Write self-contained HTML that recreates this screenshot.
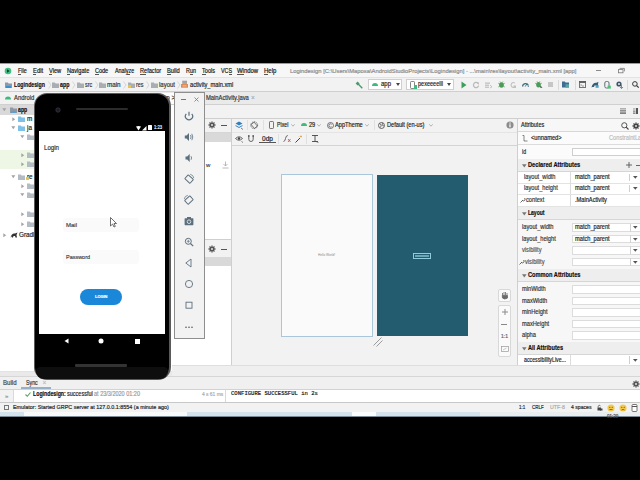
<!DOCTYPE html>
<html><head><meta charset="utf-8">
<style>
*{margin:0;padding:0;box-sizing:border-box}
html,body{width:640px;height:480px;overflow:hidden;background:#000;font-family:"Liberation Sans",sans-serif;color:#222}
.a{position:absolute}
.t{position:absolute;white-space:nowrap;-webkit-text-stroke:0.18px currentColor}
svg{overflow:visible}
</style></head><body>
<div class="a" style="left:0px;top:63px;width:640px;height:353px;background:#f2f2f2;"></div>
<div class="a" style="left:0px;top:63px;width:640px;height:14px;background:#f7f7f7;"></div>
<svg class="a" style="left:4px;top:67px;" width="8" height="8" viewBox="0 0 8 8"><circle cx="4" cy="4" r="3.3" fill="#3fbf83"/><path d="M3 2.3 L5.6 4 L3 5.7Z" fill="#0d3d2a"/></svg>
<div class="t" style="left:18.3px;top:67.90px;font-size:6.6px;line-height:6.6px;color:#111;font-weight:normal;font-family:'Liberation Sans';transform:scaleX(0.818);transform-origin:0 50%;">File</div>
<div class="a" style="left:18.3px;top:73.6px;width:2.61px;height:1px;background:#555;"></div>
<div class="t" style="left:32.8px;top:67.90px;font-size:6.6px;line-height:6.6px;color:#111;font-weight:normal;font-family:'Liberation Sans';transform:scaleX(0.888);transform-origin:0 50%;">Edit</div>
<div class="a" style="left:32.8px;top:73.6px;width:3.0300000000000002px;height:1px;background:#555;"></div>
<div class="t" style="left:48.7px;top:67.90px;font-size:6.6px;line-height:6.6px;color:#111;font-weight:normal;font-family:'Liberation Sans';transform:scaleX(0.860);transform-origin:0 50%;">View</div>
<div class="a" style="left:48.7px;top:73.6px;width:3.6599999999999984px;height:1px;background:#555;"></div>
<div class="t" style="left:66.7px;top:67.90px;font-size:6.6px;line-height:6.6px;color:#111;font-weight:normal;font-family:'Liberation Sans';transform:scaleX(0.856);transform-origin:0 50%;">Navigate</div>
<div class="a" style="left:66.7px;top:73.6px;width:3.5679999999999996px;height:1px;background:#555;"></div>
<div class="t" style="left:94.8px;top:67.90px;font-size:6.6px;line-height:6.6px;color:#111;font-weight:normal;font-family:'Liberation Sans';transform:scaleX(0.837);transform-origin:0 50%;">Code</div>
<div class="a" style="left:94.8px;top:73.6px;width:3.960000000000001px;height:1px;background:#555;"></div>
<div class="t" style="left:114.8px;top:67.90px;font-size:6.6px;line-height:6.6px;color:#111;font-weight:normal;font-family:'Liberation Sans';transform:scaleX(0.818);transform-origin:0 50%;">Analyze</div>
<div class="a" style="left:126.704px;top:73.6px;width:3.072000000000001px;height:1px;background:#555;"></div>
<div class="t" style="left:139.8px;top:67.90px;font-size:6.6px;line-height:6.6px;color:#111;font-weight:normal;font-family:'Liberation Sans';transform:scaleX(0.850);transform-origin:0 50%;">Refactor</div>
<div class="a" style="left:139.8px;top:73.6px;width:6.359999999999997px;height:1px;background:#555;"></div>
<div class="t" style="left:167px;top:67.90px;font-size:6.6px;line-height:6.6px;color:#111;font-weight:normal;font-family:'Liberation Sans';transform:scaleX(0.872);transform-origin:0 50%;">Build</div>
<div class="a" style="left:167.0px;top:73.6px;width:3.8400000000000034px;height:1px;background:#555;"></div>
<div class="t" style="left:185.7px;top:67.90px;font-size:6.6px;line-height:6.6px;color:#111;font-weight:normal;font-family:'Liberation Sans';transform:scaleX(0.826);transform-origin:0 50%;">Run</div>
<div class="a" style="left:189.5px;top:73.6px;width:3.0000000000000004px;height:1px;background:#555;"></div>
<div class="t" style="left:202px;top:67.90px;font-size:6.6px;line-height:6.6px;color:#111;font-weight:normal;font-family:'Liberation Sans';transform:scaleX(0.844);transform-origin:0 50%;">Tools</div>
<div class="a" style="left:202px;top:73.6px;width:3.9px;height:1px;background:#555;"></div>
<div class="t" style="left:220.8px;top:67.90px;font-size:6.6px;line-height:6.6px;color:#111;font-weight:normal;font-family:'Liberation Sans';transform:scaleX(0.811);transform-origin:0 50%;">VCS</div>
<div class="a" style="left:228.5px;top:73.6px;width:3.3000000000000007px;height:1px;background:#555;"></div>
<div class="t" style="left:237.2px;top:67.90px;font-size:6.6px;line-height:6.6px;color:#111;font-weight:normal;font-family:'Liberation Sans';transform:scaleX(0.899);transform-origin:0 50%;">Window</div>
<div class="a" style="left:237.2px;top:73.6px;width:6.330000000000006px;height:1px;background:#555;"></div>
<div class="t" style="left:264px;top:67.90px;font-size:6.6px;line-height:6.6px;color:#111;font-weight:normal;font-family:'Liberation Sans';transform:scaleX(0.906);transform-origin:0 50%;">Help</div>
<div class="a" style="left:264.0px;top:73.6px;width:3.690000000000003px;height:1px;background:#555;"></div>
<div class="t" style="left:290px;top:68.95px;font-size:5.9px;line-height:5.9px;color:#8a8a8a;font-weight:normal;font-family:'Liberation Sans';transform:scaleX(0.993);transform-origin:0 50%;">Logindesign [C:\Users\Maposa\AndroidStudioProjects\Logindesign] - ...\main\res\layout\activity_main.xml [app]</div>
<div class="a" style="left:595.5px;top:70px;width:5.5px;height:1px;background:#8a8a8a;"></div>
<svg class="a" style="left:618px;top:67.5px;" width="7" height="5" viewBox="0 0 7 5"><rect x="0.4" y="1.6" width="4.6" height="3.2" fill="none" stroke="#777" stroke-width="0.8"/><path d="M1.6 0.4 H6.4 V3.4" stroke="#777" stroke-width="0.8" fill="none"/></svg>
<div class="a" style="left:0px;top:63px;width:640px;height:1px;background:#9a9a9a;"></div>
<div class="a" style="left:0px;top:77px;width:640px;height:1px;background:#e3e3e3;"></div>
<div class="a" style="left:0px;top:78px;width:640px;height:13px;background:#f2f2f2;"></div>
<svg class="a" style="left:5px;top:82px;" width="7" height="6" viewBox="0 0 7 6"><path d="M0 0.5 H2.8 L3.6 1.5 H7 V6 H0Z" fill="#8d9aa6"/></svg>
<div class="a" style="left:6px;top:86px;width:5px;height:2px;background:#3a8fd0;"></div>
<div class="t" style="left:13.6px;top:81.70px;font-size:6.6px;line-height:6.6px;color:#111;font-weight:bold;font-family:'Liberation Sans';transform:scaleX(0.788);transform-origin:0 50%;">Logindesign</div>
<svg class="a" style="left:47.5px;top:81px;" width="4" height="8" viewBox="0 0 4 8"><path d="M0.5 0.5 L3 4 L0.5 7.5" stroke="#c8c8c8" stroke-width="0.7" fill="none"/></svg>
<svg class="a" style="left:52px;top:82px;" width="7" height="6" viewBox="0 0 7 6"><path d="M0 0.5 H2.8 L3.6 1.5 H7 V6 H0Z" fill="#a9aeb3"/></svg>
<div class="t" style="left:60.4px;top:81.70px;font-size:6.6px;line-height:6.6px;color:#111;font-weight:bold;font-family:'Liberation Sans';transform:scaleX(0.801);transform-origin:0 50%;">app</div>
<svg class="a" style="left:72.3px;top:81px;" width="4" height="8" viewBox="0 0 4 8"><path d="M0.5 0.5 L3 4 L0.5 7.5" stroke="#c8c8c8" stroke-width="0.7" fill="none"/></svg>
<svg class="a" style="left:76.8px;top:82px;" width="7" height="6" viewBox="0 0 7 6"><path d="M0 0.5 H2.8 L3.6 1.5 H7 V6 H0Z" fill="#a9aeb3"/></svg>
<div class="t" style="left:84.8px;top:81.70px;font-size:6.6px;line-height:6.6px;color:#333;font-weight:normal;font-family:'Liberation Sans';transform:scaleX(0.818);transform-origin:0 50%;">src</div>
<svg class="a" style="left:94.5px;top:81px;" width="4" height="8" viewBox="0 0 4 8"><path d="M0.5 0.5 L3 4 L0.5 7.5" stroke="#c8c8c8" stroke-width="0.7" fill="none"/></svg>
<svg class="a" style="left:99px;top:82px;" width="7" height="6" viewBox="0 0 7 6"><path d="M0 0.5 H2.8 L3.6 1.5 H7 V6 H0Z" fill="#a9aeb3"/></svg>
<div class="t" style="left:107px;top:81.70px;font-size:6.6px;line-height:6.6px;color:#333;font-weight:normal;font-family:'Liberation Sans';transform:scaleX(0.951);transform-origin:0 50%;">main</div>
<svg class="a" style="left:123.1px;top:81px;" width="4" height="8" viewBox="0 0 4 8"><path d="M0.5 0.5 L3 4 L0.5 7.5" stroke="#c8c8c8" stroke-width="0.7" fill="none"/></svg>
<svg class="a" style="left:127.6px;top:82px;" width="7" height="6" viewBox="0 0 7 6"><path d="M0 0.5 H2.8 L3.6 1.5 H7 V6 H0Z" fill="#a9aeb3"/></svg>
<div class="t" style="left:135.8px;top:81.70px;font-size:6.6px;line-height:6.6px;color:#333;font-weight:normal;font-family:'Liberation Sans';transform:scaleX(0.818);transform-origin:0 50%;">res</div>
<svg class="a" style="left:146.0px;top:81px;" width="4" height="8" viewBox="0 0 4 8"><path d="M0.5 0.5 L3 4 L0.5 7.5" stroke="#c8c8c8" stroke-width="0.7" fill="none"/></svg>
<svg class="a" style="left:150.5px;top:82px;" width="7" height="6" viewBox="0 0 7 6"><path d="M0 0.5 H2.8 L3.6 1.5 H7 V6 H0Z" fill="#a9aeb3"/></svg>
<div class="t" style="left:158.7px;top:81.70px;font-size:6.6px;line-height:6.6px;color:#333;font-weight:normal;font-family:'Liberation Sans';transform:scaleX(0.908);transform-origin:0 50%;">layout</div>
<div class="a" style="left:127.6px;top:85px;width:3px;height:3px;background:#e8c44a;"></div>
<svg class="a" style="left:177px;top:81px;" width="4" height="8" viewBox="0 0 4 8"><path d="M0.5 0.5 L3 4 L0.5 7.5" stroke="#c8c8c8" stroke-width="0.7" fill="none"/></svg>
<svg class="a" style="left:181px;top:80px;" width="7" height="8" viewBox="0 0 7 8"><rect x="1.2" y="0.7" width="4.8" height="3.2" fill="#a4a4a4"/><rect x="0" y="4" width="7" height="3.7" fill="#df8b55"/><rect x="1.5" y="5.2" width="4" height="1.3" fill="#f0b58a"/></svg>
<div class="t" style="left:190.4px;top:81.70px;font-size:6.6px;line-height:6.6px;color:#222;font-weight:normal;font-family:'Liberation Sans';transform:scaleX(0.862);transform-origin:0 50%;">activity_main.xml</div>
<svg class="a" style="left:355px;top:81px;" width="8" height="8" viewBox="0 0 8 8"><path d="M0.6 2.4 L2.6 0.4 L4.6 2.4 L2.6 4.4Z" fill="#4c9a6c"/><path d="M3.2 3 L7.3 7.3" stroke="#4c9a6c" stroke-width="1.4"/></svg>
<div class="a" style="left:368px;top:79px;width:34px;height:11px;background:#fff;border:1px solid #cfcfcf"></div>
<svg class="a" style="left:372px;top:82px;" width="6" height="4" viewBox="0 0 6 4"><path d="M0 4 A3 3 0 0 1 6 4Z" fill="#3dbb7f"/></svg>
<div class="t" style="left:381px;top:81.30px;font-size:6.6px;line-height:6.6px;color:#222;font-weight:normal;font-family:'Liberation Sans';transform:scaleX(0.908);transform-origin:0 50%;">app</div>
<svg class="a" style="left:396px;top:83px;" width="4" height="3" viewBox="0 0 4 3"><path d="M0 0 H4 L2 3Z" fill="#444"/></svg>
<div class="a" style="left:406px;top:79px;width:48px;height:11px;background:#fff;border:1px solid #cfcfcf"></div>
<svg class="a" style="left:410px;top:81px;" width="7" height="8" viewBox="0 0 7 8"><rect x="0.5" y="0.5" width="4" height="7" rx="0.8" fill="none" stroke="#666" stroke-width="0.8"/><rect x="4" y="4" width="3" height="4" fill="#3dbb7f"/></svg>
<div class="t" style="left:418px;top:81.30px;font-size:6.6px;line-height:6.6px;color:#222;font-weight:normal;font-family:'Liberation Sans';transform:scaleX(0.841);transform-origin:0 50%;">pexeeeelll</div>
<svg class="a" style="left:447px;top:83px;" width="4" height="3" viewBox="0 0 4 3"><path d="M0 0 H4 L2 3Z" fill="#444"/></svg>
<svg class="a" style="left:461px;top:81px;" width="6" height="8" viewBox="0 0 6 8"><path d="M0.5 0.5 L5.5 4 L0.5 7.5Z" fill="#3e9f5a"/></svg>
<svg class="a" style="left:472.5px;top:81.5px;" width="6" height="6" viewBox="0 0 6 6"><path d="M5.2 1.6 A2.6 2.6 0 1 0 5.6 3.6" stroke="#b9b9b9" stroke-width="1.2" fill="none"/><path d="M3.6 0.2 L6 0.6 L5.6 3Z" fill="#b9b9b9"/></svg>
<svg class="a" style="left:485px;top:81.5px;" width="7" height="6" viewBox="0 0 7 6"><rect x="0" y="0.5" width="5" height="1.2" fill="#bdbdbd"/><rect x="0" y="2.6" width="4" height="1.2" fill="#bdbdbd"/><rect x="0" y="4.6" width="4" height="1.2" fill="#bdbdbd"/><path d="M5 3 L7 4.8 L5 6" stroke="#bdbdbd" stroke-width="0.9" fill="none"/></svg>
<svg class="a" style="left:497.6px;top:80.8px;" width="7" height="7" viewBox="0 0 7 7"><ellipse cx="3.5" cy="4" rx="2.4" ry="2.8" fill="#4d9c55"/><path d="M0.2 2.2 L1.6 3 M6.8 2.2 L5.4 3 M0.2 6 L1.6 5.3 M6.8 6 L5.4 5.3 M2 0.5 L2.7 1.5 M5 0.5 L4.3 1.5" stroke="#4d9c55" stroke-width="0.7"/></svg>
<svg class="a" style="left:510px;top:81.5px;" width="6" height="6" viewBox="0 0 6 6"><path d="M4.8 1 A2.4 2.4 0 1 0 4.8 5" stroke="#c0c0c0" stroke-width="1.1" fill="none"/><rect x="3.5" y="3.5" width="2.5" height="2.5" fill="#c0c0c0"/></svg>
<svg class="a" style="left:522px;top:81.8px;" width="7" height="5" viewBox="0 0 7 5"><path d="M0.6 4.6 A3 3 0 0 1 6.4 3.5" stroke="#3b6f82" stroke-width="1.3" fill="none"/><path d="M3.2 4.6 L4.8 2" stroke="#3b6f82" stroke-width="0.9"/><circle cx="6.3" cy="4.3" r="0.6" fill="#3b6f82"/></svg>
<svg class="a" style="left:535px;top:80.8px;" width="8" height="7" viewBox="0 0 8 7"><ellipse cx="3.5" cy="3.8" rx="2.3" ry="2.7" fill="#4d9c55"/><path d="M0.2 2.2 L1.6 3 M6.8 2.2 L5.4 3 M2 0.3 L2.7 1.3 M5 0.3 L4.3 1.3" stroke="#4d9c55" stroke-width="0.7"/><path d="M5 4.5 L7.5 6.5 L5.5 7Z" fill="#2d4f44"/></svg>
<div class="a" style="left:548px;top:82px;width:4.7px;height:4.8px;background:#c6c6c6;"></div>
<div class="a" style="left:557.8px;top:80px;width:1px;height:10px;background:#d9d9d9;"></div>
<svg class="a" style="left:562px;top:81px;" width="7" height="7" viewBox="0 0 7 7"><path d="M0 0.5 H2.8 L3.6 1.5 H7 V6.5 H0Z" fill="#3f6f8f"/><rect x="3.5" y="3.2" width="3.5" height="3.3" fill="#5aa4a8"/></svg>
<div class="a" style="left:574.7px;top:80px;width:1px;height:10px;background:#d9d9d9;"></div>
<svg class="a" style="left:578.7px;top:81px;" width="7" height="7" viewBox="0 0 7 7"><rect x="0.4" y="0.4" width="6.2" height="6" fill="none" stroke="#555" stroke-width="0.8"/><rect x="0.4" y="0.4" width="6.2" height="1.5" fill="#555"/><path d="M1.5 3.3 L2.6 4.1 L1.5 4.9 M3 5 H5" stroke="#555" stroke-width="0.6" fill="none"/></svg>
<svg class="a" style="left:591px;top:81px;" width="8" height="7" viewBox="0 0 8 7"><path d="M0.5 6.5 C1 3 3 1.5 5.5 1.8 L7.5 0.8 L7 3 L7.2 5.8 L5.8 5.8 L5.5 4.5 L3.5 4.5 L3 6 L1.5 6 Z" fill="#3a5f75"/><rect x="4.6" y="4.2" width="3" height="2.6" fill="#4aa5c8"/></svg>
<svg class="a" style="left:604px;top:80.5px;" width="7" height="8" viewBox="0 0 7 8"><rect x="0.8" y="0.5" width="4.2" height="6.5" rx="1.5" fill="none" stroke="#55606a" stroke-width="0.9"/><rect x="3.6" y="4.6" width="3.2" height="3" fill="#4cc27a"/></svg>
<svg class="a" style="left:616px;top:80.5px;" width="8" height="8" viewBox="0 0 8 8"><circle cx="3" cy="3" r="2.6" fill="#3e5566"/><circle cx="3" cy="3" r="1" fill="#e9eef2"/><path d="M5.5 3.8 V7.5 M4 6 L5.5 7.6 L7 6" stroke="#3a9fc4" stroke-width="1" fill="none"/></svg>
<div class="a" style="left:627.3px;top:80px;width:1px;height:10px;background:#d9d9d9;"></div>
<svg class="a" style="left:632px;top:81px;" width="7" height="7" viewBox="0 0 7 7"><circle cx="2.9" cy="2.9" r="2.3" fill="none" stroke="#333" stroke-width="1"/><path d="M4.6 4.6 L6.7 6.7" stroke="#333" stroke-width="1.2"/></svg>
<div class="a" style="left:0px;top:91px;width:640px;height:1px;background:#cfcfcf;"></div>
<div class="a" style="left:0px;top:92px;width:640px;height:12px;background:#eaeaea;"></div>
<div class="a" style="left:0px;top:92px;width:150px;height:12px;background:#f2f2f2;"></div>
<svg class="a" style="left:5px;top:95px;" width="6" height="5" viewBox="0 0 6 5"><path d="M0 4.5 A3 3 0 0 1 6 4.5Z" fill="#3dbb7f"/></svg>
<div class="t" style="left:13.5px;top:95.00px;font-size:6.6px;line-height:6.6px;color:#333;font-weight:normal;font-family:'Liberation Sans';transform:scaleX(0.892);transform-origin:0 50%;">Android</div>
<div class="t" style="left:206px;top:95.00px;font-size:6.6px;line-height:6.6px;color:#333;font-weight:normal;font-family:'Liberation Sans';transform:scaleX(0.880);transform-origin:0 50%;">MainActivity.java</div>
<div class="t" style="left:251px;top:95.05px;font-size:6.5px;line-height:6.5px;color:#aaa;font-weight:normal;font-family:'Liberation Sans';">×</div>
<div class="a" style="left:0px;top:104px;width:640px;height:1px;background:#d0d0d0;"></div>
<div class="a" style="left:0px;top:105px;width:205px;height:260px;background:#fff;"></div>
<div class="a" style="left:0px;top:105px;width:170px;height:10px;background:#d9d9d9;"></div>
<svg class="a" style="left:2px;top:108.2px;" width="5" height="4" viewBox="0 0 5 4"><path d="M0.3 0.3 H4.3 L2.3 3.2Z" fill="#a3a3a3"/></svg>
<svg class="a" style="left:10px;top:107px;" width="7" height="6" viewBox="0 0 7 6"><path d="M0 0.5 H2.8 L3.6 1.5 H7 V6 H0Z" fill="#8d9aa6"/></svg>
<div class="a" style="left:11px;top:111px;width:5px;height:2px;background:#5aa0d8;"></div>
<div class="t" style="left:18.3px;top:106.70px;font-size:6.6px;line-height:6.6px;color:#111;font-weight:bold;font-family:'Liberation Sans';transform:scaleX(0.784);transform-origin:0 50%;">app</div>
<div class="a" style="left:0px;top:150px;width:34px;height:19px;background:#eef6e6;"></div>
<svg class="a" style="left:11.5px;top:116.7px;" width="4" height="5" viewBox="0 0 4 5"><path d="M0.3 0.3 V4.3 L3.2 2.3Z" fill="#a3a3a3"/></svg>
<svg class="a" style="left:18px;top:116px;" width="7" height="6" viewBox="0 0 7 6"><path d="M0 0.5 H2.8 L3.6 1.5 H7 V6 H0Z" fill="#7ec0e8"/></svg>
<div class="t" style="left:27px;top:115.85px;font-size:6.3px;line-height:6.3px;color:#222;font-weight:normal;font-family:'Liberation Sans';">m</div>
<svg class="a" style="left:11px;top:126.2px;" width="5" height="4" viewBox="0 0 5 4"><path d="M0.3 0.3 H4.3 L2.3 3.2Z" fill="#a3a3a3"/></svg>
<svg class="a" style="left:18px;top:125px;" width="7" height="6" viewBox="0 0 7 6"><path d="M0 0.5 H2.8 L3.6 1.5 H7 V6 H0Z" fill="#7ec0e8"/></svg>
<div class="t" style="left:27px;top:124.85px;font-size:6.3px;line-height:6.3px;color:#222;font-weight:normal;font-family:'Liberation Sans';">ja</div>
<svg class="a" style="left:20px;top:135.2px;" width="5" height="4" viewBox="0 0 5 4"><path d="M0.3 0.3 H4.3 L2.3 3.2Z" fill="#a3a3a3"/></svg>
<svg class="a" style="left:27px;top:134px;" width="7" height="6" viewBox="0 0 7 6"><path d="M0 0.5 H2.8 L3.6 1.5 H7 V6 H0Z" fill="#b3bcc4"/></svg>
<svg class="a" style="left:20.5px;top:152.7px;" width="4" height="5" viewBox="0 0 4 5"><path d="M0.3 0.3 V4.3 L3.2 2.3Z" fill="#a3a3a3"/></svg>
<svg class="a" style="left:27px;top:152px;" width="7" height="6" viewBox="0 0 7 6"><path d="M0 0.5 H2.8 L3.6 1.5 H7 V6 H0Z" fill="#b3bcc4"/></svg>
<svg class="a" style="left:20.5px;top:161.7px;" width="4" height="5" viewBox="0 0 4 5"><path d="M0.3 0.3 V4.3 L3.2 2.3Z" fill="#a3a3a3"/></svg>
<svg class="a" style="left:27px;top:161px;" width="7" height="6" viewBox="0 0 7 6"><path d="M0 0.5 H2.8 L3.6 1.5 H7 V6 H0Z" fill="#b3bcc4"/></svg>
<svg class="a" style="left:11px;top:175.2px;" width="5" height="4" viewBox="0 0 5 4"><path d="M0.3 0.3 H4.3 L2.3 3.2Z" fill="#a3a3a3"/></svg>
<svg class="a" style="left:18px;top:174px;" width="7" height="6" viewBox="0 0 7 6"><path d="M0 0.5 H2.8 L3.6 1.5 H7 V6 H0Z" fill="#b3bcc4"/></svg>
<div class="t" style="left:27px;top:173.85px;font-size:6.3px;line-height:6.3px;color:#222;font-weight:normal;font-family:'Liberation Sans';">re</div>
<svg class="a" style="left:20.5px;top:183.7px;" width="4" height="5" viewBox="0 0 4 5"><path d="M0.3 0.3 V4.3 L3.2 2.3Z" fill="#a3a3a3"/></svg>
<svg class="a" style="left:27px;top:183px;" width="7" height="6" viewBox="0 0 7 6"><path d="M0 0.5 H2.8 L3.6 1.5 H7 V6 H0Z" fill="#b3bcc4"/></svg>
<svg class="a" style="left:20px;top:193.2px;" width="5" height="4" viewBox="0 0 5 4"><path d="M0.3 0.3 H4.3 L2.3 3.2Z" fill="#a3a3a3"/></svg>
<svg class="a" style="left:27px;top:192px;" width="7" height="6" viewBox="0 0 7 6"><path d="M0 0.5 H2.8 L3.6 1.5 H7 V6 H0Z" fill="#b3bcc4"/></svg>
<svg class="a" style="left:20.5px;top:211.7px;" width="4" height="5" viewBox="0 0 4 5"><path d="M0.3 0.3 V4.3 L3.2 2.3Z" fill="#a3a3a3"/></svg>
<svg class="a" style="left:27px;top:211px;" width="7" height="6" viewBox="0 0 7 6"><path d="M0 0.5 H2.8 L3.6 1.5 H7 V6 H0Z" fill="#b3bcc4"/></svg>
<svg class="a" style="left:20.5px;top:221.7px;" width="4" height="5" viewBox="0 0 4 5"><path d="M0.3 0.3 V4.3 L3.2 2.3Z" fill="#a3a3a3"/></svg>
<svg class="a" style="left:27px;top:221px;" width="7" height="6" viewBox="0 0 7 6"><path d="M0 0.5 H2.8 L3.6 1.5 H7 V6 H0Z" fill="#b3bcc4"/></svg>
<div class="a" style="left:26px;top:177px;width:3px;height:3px;background:#e2c25a;"></div>
<svg class="a" style="left:2.5px;top:232.7px;" width="4" height="5" viewBox="0 0 4 5"><path d="M0.3 0.3 V4.3 L3.2 2.3Z" fill="#a3a3a3"/></svg>
<svg class="a" style="left:10px;top:232px;" width="8" height="6" viewBox="0 0 8 6"><path d="M0.5 5.5 C1.5 2 3 1 5 1.5 L7.5 0.5 L6.5 3 L7 5.5 L5.5 5.5 L5 4 L3.5 4 L3 5.5 L1.8 5.5 L2 4.2Z" fill="#333"/></svg>
<div class="t" style="left:19px;top:232.20px;font-size:6.6px;line-height:6.6px;color:#222;font-weight:normal;font-family:'Liberation Sans';transform:scaleX(0.959);transform-origin:0 50%;">Gradle</div>
<div class="a" style="left:205px;top:105px;width:435px;height:13px;background:#f2f2f2;"></div>
<svg class="a" style="left:620px;top:108px;" width="6" height="6" viewBox="0 0 6 6"><rect x="0" y="0" width="6" height="1.6" fill="#b0b0b0"/><rect x="0" y="2.2" width="6" height="1.3" fill="#777"/><rect x="0" y="4.4" width="6" height="1.4" fill="#666"/></svg>
<svg class="a" style="left:632.8px;top:108px;" width="5" height="6" viewBox="0 0 5 6"><rect x="0" y="0.3" width="2.5" height="1.3" fill="#aaa"/><rect x="0" y="2.5" width="2.5" height="1.3" fill="#888"/><rect x="0" y="4.5" width="2.5" height="1.3" fill="#777"/><rect x="3" y="0" width="2" height="6" fill="#555"/></svg>
<div class="a" style="left:205px;top:118px;width:435px;height:1px;background:#cfcfcf;"></div>
<div class="a" style="left:205px;top:119px;width:26px;height:246px;background:#fff;"></div>
<div class="a" style="left:205px;top:119px;width:26px;height:13px;background:#f2f2f2;"></div>
<svg class="a" style="left:208px;top:121px;" width="8" height="8" viewBox="0 0 8 8"><g transform="translate(4 4)" stroke="#555"><path d="M0 -3.5 V3.5 M-3.5 0 H3.5 M-2.5 -2.5 L2.5 2.5 M2.5 -2.5 L-2.5 2.5" stroke-width="1.3"/><circle r="2.3" fill="#555" stroke="none"/><circle r="0.9" fill="#f2f2f2" stroke="none"/></g></svg>
<div class="a" style="left:221px;top:125px;width:6px;height:1px;background:#555;"></div>
<div class="a" style="left:150px;top:93px;width:55px;height:11px;background:#fff;"></div>
<div class="t" style="left:166px;top:95.00px;font-size:6.6px;line-height:6.6px;color:#222;font-weight:normal;font-family:'Liberation Sans';">p &gt;</div>
<div class="a" style="left:205px;top:132px;width:26px;height:1px;background:#d6d6d6;"></div>
<div class="a" style="left:205px;top:133px;width:26px;height:9px;background:#d9d9d9;"></div>
<div class="t" style="left:206px;top:162.00px;font-size:6px;line-height:6px;color:#444;font-weight:normal;font-family:'Liberation Sans';">w</div>
<svg class="a" style="left:222px;top:161px;" width="7" height="8" viewBox="0 0 7 8"><path d="M3.5 0.5 V5 M1.5 3 L3.5 5 L5.5 3 M0.5 7 H6.5" stroke="#aaa" stroke-width="0.8" fill="none"/></svg>
<div class="a" style="left:205px;top:239px;width:26px;height:1px;background:#cfcfcf;"></div>
<div class="a" style="left:205px;top:240px;width:26px;height:17px;background:#f2f2f2;"></div>
<svg class="a" style="left:208px;top:245px;" width="8" height="8" viewBox="0 0 8 8"><g transform="translate(4 4)" stroke="#555"><path d="M0 -3.5 V3.5 M-3.5 0 H3.5 M-2.5 -2.5 L2.5 2.5 M2.5 -2.5 L-2.5 2.5" stroke-width="1.3"/><circle r="2.3" fill="#555" stroke="none"/><circle r="0.9" fill="#f2f2f2" stroke="none"/></g></svg>
<div class="a" style="left:221px;top:249px;width:6px;height:1px;background:#555;"></div>
<div class="a" style="left:205px;top:257px;width:26px;height:9px;background:#d9d9d9;"></div>
<div class="a" style="left:231px;top:119px;width:1px;height:246px;background:#cfcfcf;"></div>
<div class="a" style="left:232px;top:119px;width:285px;height:26px;background:#f2f2f2;"></div>
<div class="a" style="left:232px;top:132px;width:285px;height:1px;background:#e4e4e4;"></div>
<div class="a" style="left:232px;top:145px;width:285px;height:1px;background:#d4d4d4;"></div>
<svg class="a" style="left:235px;top:121px;" width="8" height="9" viewBox="0 0 8 9"><path d="M4 0.5 L7.5 2.5 L4 4.5 L0.5 2.5Z" fill="#2f7fc1"/><path d="M0.5 4 L4 6 L7.5 4 V5 L4 7 L0.5 5Z" fill="#2f7fc1"/><path d="M6 7 L8 8.5" stroke="#333" stroke-width="0.6"/></svg>
<div class="a" style="left:246.7px;top:120px;width:1px;height:10px;background:#e0e0e0;"></div>
<svg class="a" style="left:250px;top:121px;" width="9" height="9" viewBox="0 0 9 9"><circle cx="4.2" cy="4.2" r="3.4" fill="none" stroke="#555" stroke-width="0.8" stroke-dasharray="1.5 0.7"/><rect x="2.3" y="1.8" width="3.8" height="5" transform="rotate(-40 4.2 4.2)" fill="none" stroke="#555" stroke-width="0.7"/></svg>
<div class="a" style="left:262.7px;top:120px;width:1px;height:10px;background:#e0e0e0;"></div>
<svg class="a" style="left:269px;top:121px;" width="5" height="8" viewBox="0 0 5 8"><rect x="0.5" y="0.5" width="4" height="7" rx="0.7" fill="none" stroke="#555" stroke-width="0.8"/></svg>
<div class="t" style="left:276.7px;top:121.90px;font-size:6.6px;line-height:6.6px;color:#222;font-weight:normal;font-family:'Liberation Sans';transform:scaleX(0.790);transform-origin:0 50%;">Pixel</div>
<svg class="a" style="left:290.5px;top:124px;" width="4" height="3" viewBox="0 0 4 3"><path d="M0.3 0.3 L2 2.2 L3.7 0.3" stroke="#888" stroke-width="0.6" fill="none"/></svg>
<svg class="a" style="left:300.5px;top:122px;" width="6" height="4" viewBox="0 0 6 4"><path d="M0 4 A3 3 0 0 1 6 4Z" fill="#3dbb7f"/></svg>
<div class="t" style="left:308.5px;top:121.90px;font-size:6.6px;line-height:6.6px;color:#222;font-weight:normal;font-family:'Liberation Sans';transform:scaleX(0.845);transform-origin:0 50%;">29</div>
<svg class="a" style="left:317px;top:124px;" width="4" height="3" viewBox="0 0 4 3"><path d="M0.3 0.3 L2 2.2 L3.7 0.3" stroke="#888" stroke-width="0.6" fill="none"/></svg>
<svg class="a" style="left:327px;top:121.5px;" width="7" height="7" viewBox="0 0 7 7"><circle cx="3.5" cy="3.5" r="3" fill="none" stroke="#444" stroke-width="0.7"/><path d="M4.6 2.3 A1.6 1.6 0 1 0 4.6 4.7" stroke="#444" stroke-width="0.7" fill="none"/></svg>
<div class="t" style="left:335px;top:121.90px;font-size:6.6px;line-height:6.6px;color:#222;font-weight:normal;font-family:'Liberation Sans';transform:scaleX(0.861);transform-origin:0 50%;">AppTheme</div>
<svg class="a" style="left:365px;top:124px;" width="4" height="3" viewBox="0 0 4 3"><path d="M0.3 0.3 L2 2.2 L3.7 0.3" stroke="#888" stroke-width="0.6" fill="none"/></svg>
<div class="a" style="left:373.5px;top:120px;width:1px;height:10px;background:#e0e0e0;"></div>
<svg class="a" style="left:378px;top:121.5px;" width="7" height="7" viewBox="0 0 7 7"><circle cx="3.5" cy="3.5" r="3" fill="none" stroke="#444" stroke-width="0.8"/><path d="M1.5 1.5 L3.2 3 L2.6 5.5 M4.5 0.8 L4 3 L6 4" stroke="#444" stroke-width="0.7" fill="none"/></svg>
<div class="t" style="left:386.6px;top:121.90px;font-size:6.6px;line-height:6.6px;color:#222;font-weight:normal;font-family:'Liberation Sans';transform:scaleX(0.857);transform-origin:0 50%;">Default (en-us)</div>
<svg class="a" style="left:428.5px;top:124px;" width="4" height="3" viewBox="0 0 4 3"><path d="M0.3 0.3 L2 2.2 L3.7 0.3" stroke="#888" stroke-width="0.6" fill="none"/></svg>
<svg class="a" style="left:506px;top:121px;" width="8" height="8" viewBox="0 0 8 8"><circle cx="4" cy="4" r="3.6" fill="#8c8c8c"/><rect x="3.4" y="3.3" width="1.2" height="3" fill="#fff"/><rect x="3.4" y="1.5" width="1.2" height="1.1" fill="#fff"/></svg>
<svg class="a" style="left:235px;top:135px;" width="9" height="8" viewBox="0 0 9 8"><path d="M0.5 3.5 Q4 0 7.5 3.5 Q4 7 0.5 3.5Z" fill="none" stroke="#444" stroke-width="0.8"/><circle cx="4" cy="3.5" r="1.2" fill="#444"/><path d="M6.5 6.5 L8 7.5" stroke="#333" stroke-width="0.6"/></svg>
<svg class="a" style="left:248px;top:135px;" width="6" height="8" viewBox="0 0 6 8"><path d="M0.8 0.5 V4.3 A2.2 2.2 0 0 0 5.2 4.3 V0.5" fill="none" stroke="#555" stroke-width="0.9"/><rect x="0.2" y="0.3" width="1.3" height="1.3" fill="#333"/><rect x="4.5" y="0.3" width="1.3" height="1.3" fill="#333"/></svg>
<div class="t" style="left:261.6px;top:136.10px;font-size:6.4px;line-height:6.4px;color:#222;font-weight:normal;font-family:'Liberation Sans';transform:scaleX(1.021);transform-origin:0 50%;">0dp</div>
<div class="a" style="left:258.5px;top:142.2px;width:17px;height:1px;background:#555;"></div>
<div class="a" style="left:278.3px;top:134px;width:1px;height:10px;background:#e0e0e0;"></div>
<svg class="a" style="left:283px;top:135px;" width="8" height="8" viewBox="0 0 8 8"><path d="M0.5 6.5 Q2 6.5 2.5 3.5 Q3 0.5 4.8 0.5" stroke="#444" stroke-width="0.8" fill="none"/><path d="M5 4 L7.5 7 M7.5 4 L5 7" stroke="#d0453d" stroke-width="0.8"/></svg>
<svg class="a" style="left:295px;top:135px;" width="8" height="8" viewBox="0 0 8 8"><path d="M0.5 7.5 L5 3" stroke="#444" stroke-width="1"/><path d="M6 0.5 V2.5 M5 1.5 H7 M3.5 1 L4 1.5" stroke="#d89a3d" stroke-width="0.7"/></svg>
<div class="a" style="left:306px;top:134px;width:1px;height:10px;background:#e0e0e0;"></div>
<svg class="a" style="left:311px;top:135px;" width="8" height="8" viewBox="0 0 8 8"><path d="M1 0.5 H7 M4 0.5 V6.5 M1 6.5 H7" stroke="#444" stroke-width="0.9"/><path d="M5.5 7 L7.5 7.5" stroke="#333" stroke-width="0.5"/></svg>
<div class="a" style="left:232px;top:146px;width:285px;height:219px;background:#f2f2f2;"></div>
<div class="a" style="left:281px;top:174px;width:92px;height:163px;background:#fafafa;border:1px solid #a9c6da"></div>
<div class="t" style="left:317.6px;top:253.70px;font-size:3.6px;line-height:3.6px;color:#888;font-weight:normal;font-family:'Liberation Sans';transform:scaleX(0.880);transform-origin:0 50%;-webkit-text-stroke:0">Hello World!</div>
<div class="a" style="left:377px;top:175px;width:91px;height:161px;background:#225c6e;"></div>
<div class="a" style="left:413px;top:253px;width:18px;height:5.5px;background:transparent;border:0.8px solid #8fcbdc"></div>
<div class="a" style="left:415px;top:255px;width:14px;height:1.5px;background:#6aa7b6;"></div>
<svg class="a" style="left:373px;top:337px;" width="11" height="10" viewBox="0 0 11 10"><path d="M0.5 8.5 L8.5 0.5 M3.5 9.5 L9.5 3.5" stroke="#777" stroke-width="0.7"/></svg>
<div class="a" style="left:498px;top:289px;width:13px;height:13px;background:#fafafa;border:1px solid #d8d8d8;border-radius:2px"></div>
<svg class="a" style="left:500.5px;top:291px;" width="8" height="9" viewBox="0 0 8 9"><path d="M1.5 4.5 V2 M3 4 V1 M4.5 4 V1 M6 4.5 V2 M1.2 4.5 L1.5 7 Q3.5 9 6.5 7 L6.5 4.5 Z" stroke="#6a6a6a" stroke-width="0.8" fill="#6a6a6a"/></svg>
<div class="a" style="left:498px;top:305px;width:13px;height:52px;background:#fafafa;border:1px solid #d8d8d8;border-radius:2px"></div>
<svg class="a" style="left:501.5px;top:309px;" width="6" height="6" viewBox="0 0 6 6"><path d="M3 0 V6 M0 3 H6" stroke="#8a8a8a" stroke-width="1"/></svg>
<div class="a" style="left:501px;top:324px;width:6px;height:1px;background:#888;"></div>
<div class="t" style="left:501px;top:334.30px;font-size:5px;line-height:5px;color:#666;font-weight:normal;font-family:'Liberation Sans';transform:scaleX(1.007);transform-origin:0 50%;">1:1</div>
<svg class="a" style="left:500.5px;top:346px;" width="8" height="6" viewBox="0 0 8 6"><rect x="0.5" y="0.5" width="7" height="5" fill="none" stroke="#999" stroke-width="0.7"/><path d="M2 4 L5.5 2" stroke="#999" stroke-width="0.5"/></svg>
<div class="a" style="left:517px;top:119px;width:1px;height:246px;background:#cfcfcf;"></div>
<div class="a" style="left:518px;top:119px;width:122px;height:246px;background:#f7f7f7;"></div>
<div class="t" style="left:520.8px;top:122.30px;font-size:6.6px;line-height:6.6px;color:#222;font-weight:normal;font-family:'Liberation Sans';transform:scaleX(0.832);transform-origin:0 50%;">Attributes</div>
<svg class="a" style="left:620.5px;top:121.5px;" width="8" height="8" viewBox="0 0 8 8"><circle cx="3.3" cy="3.3" r="2.6" fill="none" stroke="#444" stroke-width="0.9"/><path d="M5.2 5.2 L7.5 7.5" stroke="#444" stroke-width="1.1"/></svg>
<svg class="a" style="left:632px;top:121.5px;" width="8" height="8" viewBox="0 0 8 8"><g transform="translate(4 4)" stroke="#444"><path d="M0 -3.5 V3.5 M-3.5 0 H3.5 M-2.5 -2.5 L2.5 2.5 M2.5 -2.5 L-2.5 2.5" stroke-width="1.3"/><circle r="2.3" fill="#444" stroke="none"/><circle r="0.9" fill="#f2f2f2" stroke="none"/></g></svg>
<div class="a" style="left:518px;top:131px;width:122px;height:1px;background:#d8d8d8;"></div>
<div class="a" style="left:518px;top:132px;width:122px;height:12px;background:#fbfbfb;"></div>
<svg class="a" style="left:522px;top:134.5px;" width="6" height="7" viewBox="0 0 6 7"><path d="M0.5 0.5 H2 V6 H5.5" stroke="#555" stroke-width="0.7" fill="none"/></svg>
<div class="t" style="left:531px;top:134.70px;font-size:6.6px;line-height:6.6px;color:#222;font-weight:normal;font-family:'Liberation Sans';transform:scaleX(0.871);transform-origin:0 50%;">&lt;unnamed&gt;</div>
<div class="t" style="left:609px;top:134.70px;font-size:6.6px;line-height:6.6px;color:#bbb;font-weight:normal;font-family:'Liberation Sans';transform:scaleX(0.862);transform-origin:0 50%;">ConstraintLayout</div>
<div class="a" style="left:518px;top:144px;width:122px;height:1px;background:#dcdcdc;"></div>
<div class="a" style="left:518px;top:145px;width:122px;height:14px;background:#fbfbfb;"></div>
<div class="t" style="left:521.5px;top:149.00px;font-size:6.6px;line-height:6.6px;color:#222;font-weight:normal;font-family:'Liberation Sans';transform:scaleX(0.779);transform-origin:0 50%;">id</div>
<div class="a" style="left:571.5px;top:147.5px;width:70px;height:8px;background:#fff;border:1px solid #cfcfcf"></div>
<div class="a" style="left:518px;top:158.5px;width:122px;height:1px;background:#d6d6d6;"></div>
<div class="a" style="left:518px;top:159px;width:122px;height:12px;background:#eeeeee;"></div>
<svg class="a" style="left:521.5px;top:163.5px;" width="5" height="4" viewBox="0 0 5 4"><path d="M0 0.3 H4.6 L2.3 3.5Z" fill="#777"/></svg>
<div class="t" style="left:527.5px;top:162.20px;font-size:6.6px;line-height:6.6px;color:#111;font-weight:bold;font-family:'Liberation Sans';transform:scaleX(0.863);transform-origin:0 50%;">Declared Attributes</div>
<div class="a" style="left:518px;top:171px;width:122px;height:1px;background:#d6d6d6;"></div>
<svg class="a" style="left:626.3px;top:162.3px;" width="6" height="6" viewBox="0 0 6 6"><path d="M3 0 V6 M0 3 H6" stroke="#555" stroke-width="0.9"/></svg>
<div class="a" style="left:636px;top:165px;width:6px;height:1px;background:#666;"></div>
<div class="a" style="left:518px;top:172px;width:122px;height:35px;background:#fff;"></div>
<div class="t" style="left:524px;top:173.70px;font-size:6.6px;line-height:6.6px;color:#333;font-weight:normal;font-family:'Liberation Sans';transform:scaleX(0.860);transform-origin:0 50%;">layout_width</div>
<div class="a" style="left:570.4px;top:171.5px;width:1px;height:11px;background:#dcdcdc;"></div>
<div class="t" style="left:575px;top:173.70px;font-size:6.6px;line-height:6.6px;color:#222;font-weight:normal;font-family:'Liberation Sans';transform:scaleX(0.860);transform-origin:0 50%;">match_parent</div>
<div class="a" style="left:629px;top:173.5px;width:1px;height:7px;background:#cfcfcf;"></div>
<svg class="a" style="left:633px;top:175.8px;" width="5" height="3" viewBox="0 0 5 3"><path d="M0 0 H4.6 L2.3 2.8Z" fill="#555"/></svg>
<div class="a" style="left:518px;top:182.7px;width:122px;height:1px;background:#e3e3e3;"></div>
<div class="t" style="left:524px;top:185.00px;font-size:6.6px;line-height:6.6px;color:#333;font-weight:normal;font-family:'Liberation Sans';transform:scaleX(0.860);transform-origin:0 50%;">layout_height</div>
<div class="a" style="left:570.4px;top:182.8px;width:1px;height:11px;background:#dcdcdc;"></div>
<div class="t" style="left:575px;top:185.00px;font-size:6.6px;line-height:6.6px;color:#222;font-weight:normal;font-family:'Liberation Sans';transform:scaleX(0.860);transform-origin:0 50%;">match_parent</div>
<div class="a" style="left:629px;top:184.8px;width:1px;height:7px;background:#cfcfcf;"></div>
<svg class="a" style="left:633px;top:187.10000000000002px;" width="5" height="3" viewBox="0 0 5 3"><path d="M0 0 H4.6 L2.3 2.8Z" fill="#555"/></svg>
<div class="a" style="left:518px;top:194.0px;width:122px;height:1px;background:#e3e3e3;"></div>
<svg class="a" style="left:519.5px;top:197px;" width="5" height="6" viewBox="0 0 5 6"><path d="M0.5 5.5 L3 3 M2.5 3.5 A1.5 1.5 0 1 0 4.5 1" stroke="#444" stroke-width="0.8" fill="none"/></svg>
<div class="t" style="left:526px;top:196.70px;font-size:6.6px;line-height:6.6px;color:#333;font-weight:normal;font-family:'Liberation Sans';transform:scaleX(0.860);transform-origin:0 50%;">context</div>
<div class="a" style="left:570.4px;top:194.5px;width:1px;height:11px;background:#dcdcdc;"></div>
<div class="t" style="left:575px;top:196.70px;font-size:6.6px;line-height:6.6px;color:#222;font-weight:normal;font-family:'Liberation Sans';transform:scaleX(0.860);transform-origin:0 50%;">.MainActivity</div>
<div class="a" style="left:518px;top:205.7px;width:122px;height:1px;background:#e3e3e3;"></div>
<div class="a" style="left:518px;top:206.5px;width:122px;height:1px;background:#d6d6d6;"></div>
<div class="a" style="left:518px;top:207px;width:122px;height:12px;background:#eeeeee;"></div>
<svg class="a" style="left:521.5px;top:211.5px;" width="5" height="4" viewBox="0 0 5 4"><path d="M0 0.3 H4.6 L2.3 3.5Z" fill="#777"/></svg>
<div class="t" style="left:527.5px;top:210.20px;font-size:6.6px;line-height:6.6px;color:#111;font-weight:bold;font-family:'Liberation Sans';transform:scaleX(0.763);transform-origin:0 50%;">Layout</div>
<div class="a" style="left:518px;top:219px;width:122px;height:1px;background:#d6d6d6;"></div>
<div class="t" style="left:522px;top:224.20px;font-size:6.6px;line-height:6.6px;color:#333;font-weight:normal;font-family:'Liberation Sans';transform:scaleX(0.860);transform-origin:0 50%;">layout_width</div>
<div class="a" style="left:571.5px;top:223.2px;width:70px;height:8.6px;background:#fff;border:1px solid #dcdcdc"></div>
<div class="t" style="left:575px;top:224.20px;font-size:6.6px;line-height:6.6px;color:#222;font-weight:normal;font-family:'Liberation Sans';transform:scaleX(0.860);transform-origin:0 50%;">match_parent</div>
<div class="a" style="left:630px;top:223.5px;width:1px;height:8px;background:#d2d2d2;"></div>
<svg class="a" style="left:633px;top:226.3px;" width="5" height="3" viewBox="0 0 5 3"><path d="M0 0 H4.6 L2.3 2.8Z" fill="#555"/></svg>
<div class="t" style="left:522px;top:235.70px;font-size:6.6px;line-height:6.6px;color:#333;font-weight:normal;font-family:'Liberation Sans';transform:scaleX(0.860);transform-origin:0 50%;">layout_height</div>
<div class="a" style="left:571.5px;top:234.7px;width:70px;height:8.6px;background:#fff;border:1px solid #dcdcdc"></div>
<div class="t" style="left:575px;top:235.70px;font-size:6.6px;line-height:6.6px;color:#222;font-weight:normal;font-family:'Liberation Sans';transform:scaleX(0.860);transform-origin:0 50%;">match_parent</div>
<div class="a" style="left:630px;top:235px;width:1px;height:8px;background:#d2d2d2;"></div>
<svg class="a" style="left:633px;top:237.8px;" width="5" height="3" viewBox="0 0 5 3"><path d="M0 0 H4.6 L2.3 2.8Z" fill="#555"/></svg>
<div class="t" style="left:522px;top:247.10px;font-size:6.6px;line-height:6.6px;color:#555;font-weight:normal;font-family:'Liberation Sans';transform:scaleX(0.860);transform-origin:0 50%;">visibility</div>
<div class="a" style="left:571.5px;top:246.1px;width:70px;height:8.6px;background:#fff;border:1px solid #dcdcdc"></div>
<div class="a" style="left:630px;top:246.4px;width:1px;height:8px;background:#d2d2d2;"></div>
<svg class="a" style="left:633px;top:249.20000000000002px;" width="5" height="3" viewBox="0 0 5 3"><path d="M0 0 H4.6 L2.3 2.8Z" fill="#555"/></svg>
<svg class="a" style="left:519px;top:259px;" width="5" height="6" viewBox="0 0 5 6"><path d="M0.5 5.5 L3 3 M2.5 3.5 A1.5 1.5 0 1 0 4.5 1" stroke="#444" stroke-width="0.8" fill="none"/></svg>
<div class="t" style="left:525px;top:258.70px;font-size:6.6px;line-height:6.6px;color:#555;font-weight:normal;font-family:'Liberation Sans';transform:scaleX(0.860);transform-origin:0 50%;">visibility</div>
<div class="a" style="left:571.5px;top:257.7px;width:70px;height:8.6px;background:#fff;border:1px solid #dcdcdc"></div>
<div class="a" style="left:630px;top:258px;width:1px;height:8px;background:#d2d2d2;"></div>
<svg class="a" style="left:633px;top:260.8px;" width="5" height="3" viewBox="0 0 5 3"><path d="M0 0 H4.6 L2.3 2.8Z" fill="#555"/></svg>
<div class="a" style="left:518px;top:268.5px;width:122px;height:1px;background:#d6d6d6;"></div>
<div class="a" style="left:518px;top:269px;width:122px;height:12px;background:#eeeeee;"></div>
<svg class="a" style="left:521.5px;top:273.5px;" width="5" height="4" viewBox="0 0 5 4"><path d="M0 0.3 H4.6 L2.3 3.5Z" fill="#777"/></svg>
<div class="t" style="left:527.5px;top:272.20px;font-size:6.6px;line-height:6.6px;color:#111;font-weight:bold;font-family:'Liberation Sans';transform:scaleX(0.856);transform-origin:0 50%;">Common Attributes</div>
<div class="a" style="left:518px;top:281px;width:122px;height:1px;background:#d6d6d6;"></div>
<div class="t" style="left:522px;top:286.40px;font-size:6.6px;line-height:6.6px;color:#333;font-weight:normal;font-family:'Liberation Sans';transform:scaleX(0.860);transform-origin:0 50%;">minWidth</div>
<div class="a" style="left:571.5px;top:285.4px;width:70px;height:8.6px;background:#fff;border:1px solid #dcdcdc"></div>
<div class="t" style="left:522px;top:297.70px;font-size:6.6px;line-height:6.6px;color:#333;font-weight:normal;font-family:'Liberation Sans';transform:scaleX(0.860);transform-origin:0 50%;">maxWidth</div>
<div class="a" style="left:571.5px;top:296.7px;width:70px;height:8.6px;background:#fff;border:1px solid #dcdcdc"></div>
<div class="t" style="left:522px;top:309.00px;font-size:6.6px;line-height:6.6px;color:#333;font-weight:normal;font-family:'Liberation Sans';transform:scaleX(0.860);transform-origin:0 50%;">minHeight</div>
<div class="a" style="left:571.5px;top:308.0px;width:70px;height:8.6px;background:#fff;border:1px solid #dcdcdc"></div>
<div class="t" style="left:522px;top:320.50px;font-size:6.6px;line-height:6.6px;color:#333;font-weight:normal;font-family:'Liberation Sans';transform:scaleX(0.860);transform-origin:0 50%;">maxHeight</div>
<div class="a" style="left:571.5px;top:319.5px;width:70px;height:8.6px;background:#fff;border:1px solid #dcdcdc"></div>
<div class="t" style="left:522px;top:332.20px;font-size:6.6px;line-height:6.6px;color:#333;font-weight:normal;font-family:'Liberation Sans';transform:scaleX(0.860);transform-origin:0 50%;">alpha</div>
<div class="a" style="left:571.5px;top:331.2px;width:70px;height:8.6px;background:#fff;border:1px solid #dcdcdc"></div>
<div class="a" style="left:518px;top:341.8px;width:122px;height:1px;background:#d6d6d6;"></div>
<div class="a" style="left:518px;top:342px;width:122px;height:12px;background:#eeeeee;"></div>
<svg class="a" style="left:521.5px;top:346.5px;" width="5" height="4" viewBox="0 0 5 4"><path d="M0 0.3 H4.6 L2.3 3.5Z" fill="#777"/></svg>
<div class="t" style="left:527.5px;top:345.20px;font-size:6.6px;line-height:6.6px;color:#111;font-weight:bold;font-family:'Liberation Sans';transform:scaleX(0.852);transform-origin:0 50%;">All Attributes</div>
<div class="a" style="left:518px;top:354px;width:122px;height:1px;background:#d6d6d6;"></div>
<div class="a" style="left:518px;top:355px;width:122px;height:10px;background:#fff;"></div>
<div class="t" style="left:524px;top:357.00px;font-size:6.6px;line-height:6.6px;color:#222;font-weight:normal;font-family:'Liberation Sans';transform:scaleX(0.795);transform-origin:0 50%;">accessibilityLive...</div>
<div class="a" style="left:570px;top:355px;width:1px;height:10px;background:#dcdcdc;"></div>
<div class="a" style="left:629px;top:356px;width:1px;height:8px;background:#cfcfcf;"></div>
<svg class="a" style="left:633px;top:359px;" width="5" height="3" viewBox="0 0 5 3"><path d="M0 0 H4.6 L2.3 2.8Z" fill="#555"/></svg>
<div class="a" style="left:0px;top:365px;width:640px;height:11px;background:#efefef;"></div>
<div class="a" style="left:0px;top:365px;width:172px;height:6px;background:#fff;"></div>
<div class="a" style="left:0px;top:371px;width:172px;height:1px;background:#e2e2e2;"></div>
<div class="a" style="left:0px;top:372px;width:172px;height:4px;background:#e9e9e9;"></div>
<div class="a" style="left:172px;top:365px;width:468px;height:1px;background:#dedede;"></div>
<div class="a" style="left:0px;top:376px;width:640px;height:1px;background:#d6d6d6;"></div>
<div class="a" style="left:0px;top:377px;width:640px;height:12px;background:#f0f0f0;"></div>
<div class="t" style="left:2.8px;top:379.70px;font-size:6.6px;line-height:6.6px;color:#444;font-weight:normal;font-family:'Liberation Sans';transform:scaleX(0.927);transform-origin:0 50%;">Build</div>
<div class="t" style="left:26.2px;top:379.70px;font-size:6.6px;line-height:6.6px;color:#333;font-weight:normal;font-family:'Liberation Sans';transform:scaleX(0.797);transform-origin:0 50%;">Sync</div>
<div class="t" style="left:42.5px;top:379.55px;font-size:6.5px;line-height:6.5px;color:#bbb;font-weight:normal;font-family:'Liberation Sans';">×</div>
<div class="a" style="left:20.6px;top:387px;width:30px;height:1.5px;background:#98b0c6;"></div>
<svg class="a" style="left:632px;top:379.5px;" width="8" height="8" viewBox="0 0 8 8"><g transform="translate(4 4)" stroke="#555"><path d="M0 -3.5 V3.5 M-3.5 0 H3.5 M-2.5 -2.5 L2.5 2.5 M2.5 -2.5 L-2.5 2.5" stroke-width="1.3"/><circle r="2.3" fill="#555" stroke="none"/><circle r="0.9" fill="#f2f2f2" stroke="none"/></g></svg>
<div class="a" style="left:0px;top:388.8px;width:640px;height:1px;background:#d2d2d2;"></div>
<div class="a" style="left:0px;top:389.5px;width:640px;height:12.5px;background:#fff;"></div>
<div class="a" style="left:0px;top:389.5px;width:13px;height:12.5px;background:#f2f2f2;"></div>
<div class="a" style="left:13px;top:389.5px;width:1px;height:12.5px;background:#dadada;"></div>
<div class="t" style="left:5px;top:393.20px;font-size:6px;line-height:6px;color:#999;font-weight:normal;font-family:'Liberation Sans';">»</div>
<svg class="a" style="left:24.5px;top:392px;" width="6" height="5" viewBox="0 0 6 5"><path d="M0.5 2.5 L2.3 4.3 L5.5 0.5" stroke="#5aa35a" stroke-width="1.1" fill="none"/></svg>
<div class="t" style="left:32.8px;top:391.40px;font-size:6.6px;line-height:6.6px;color:#111;font-weight:bold;font-family:'Liberation Sans';transform:scaleX(0.792);transform-origin:0 50%;">Logindesign:</div>
<div class="t" style="left:66.7px;top:391.40px;font-size:6.6px;line-height:6.6px;color:#222;font-weight:normal;font-family:'Liberation Sans';transform:scaleX(0.837);transform-origin:0 50%;">successful</div>
<div class="t" style="left:94px;top:391.40px;font-size:6.6px;line-height:6.6px;color:#999;font-weight:normal;font-family:'Liberation Sans';transform:scaleX(0.836);transform-origin:0 50%;">at 23/3/2020 01:20</div>
<div class="t" style="left:201.6px;top:391.90px;font-size:5.6px;line-height:5.6px;color:#aaa;font-weight:normal;font-family:'Liberation Sans';transform:scaleX(0.873);transform-origin:0 50%;">4 s 61 ms</div>
<div class="a" style="left:225.4px;top:389.5px;width:1px;height:12.5px;background:#dadada;"></div>
<div class="t" style="left:230.9px;top:391.20px;font-size:6px;line-height:6px;color:#111;font-weight:normal;font-family:'Liberation Mono';transform:scaleX(0.929);transform-origin:0 50%;">CONFIGURE SUCCESSFUL in 2s</div>
<div class="a" style="left:0px;top:402px;width:640px;height:1px;background:#c8c8c8;"></div>
<div class="a" style="left:0px;top:402.5px;width:640px;height:9.5px;background:#f2f2f2;"></div>
<div class="a" style="left:3.5px;top:404.5px;width:5.5px;height:5px;background:transparent;border:0.8px solid #777"></div>
<div class="t" style="left:12.9px;top:404.10px;font-size:6.2px;line-height:6.2px;color:#222;font-weight:normal;font-family:'Liberation Sans';transform:scaleX(0.874);transform-origin:0 50%;">Emulator: Started GRPC server at 127.0.0.1:8554 (a minute ago)</div>
<div class="t" style="left:518.75px;top:404.10px;font-size:6.2px;line-height:6.2px;color:#222;font-weight:normal;font-family:'Liberation Sans';transform:scaleX(0.725);transform-origin:0 50%;">1:1</div>
<div class="t" style="left:532px;top:404.10px;font-size:6.2px;line-height:6.2px;color:#222;font-weight:normal;font-family:'Liberation Sans';transform:scaleX(0.726);transform-origin:0 50%;">CRLF</div>
<div class="t" style="left:550px;top:404.10px;font-size:6.2px;line-height:6.2px;color:#aaa;font-weight:normal;font-family:'Liberation Sans';transform:scaleX(0.854);transform-origin:0 50%;">UTF-8</div>
<div class="t" style="left:570.75px;top:404.10px;font-size:6.2px;line-height:6.2px;color:#222;font-weight:normal;font-family:'Liberation Sans';transform:scaleX(0.826);transform-origin:0 50%;">4 spaces</div>
<svg class="a" style="left:597px;top:404.5px;" width="6" height="6" viewBox="0 0 6 6"><rect x="0.5" y="2.5" width="3.5" height="3" fill="#444"/><path d="M1.2 2.5 V1.2 A1.2 1.2 0 0 1 3.5 1.2" stroke="#444" stroke-width="0.7" fill="none"/><rect x="3" y="3.5" width="2.5" height="2" fill="#444"/></svg>
<svg class="a" style="left:607px;top:403.5px;" width="8" height="8" viewBox="0 0 8 8"><circle cx="4" cy="4" r="3.6" fill="#f2c94c"/><circle cx="2.8" cy="3.3" r="0.5" fill="#333"/><circle cx="5.2" cy="3.3" r="0.5" fill="#333"/><path d="M2.5 5.5 H5.5" stroke="#333" stroke-width="0.6"/></svg>
<svg class="a" style="left:619px;top:403.5px;" width="8" height="8" viewBox="0 0 8 8"><circle cx="4" cy="4" r="3.6" fill="#f2c94c"/><circle cx="2.8" cy="3.3" r="0.5" fill="#333"/><circle cx="5.2" cy="3.3" r="0.5" fill="#333"/><path d="M2.5 6 Q4 4.8 5.5 6" stroke="#333" stroke-width="0.6" fill="none"/></svg>
<svg class="a" style="left:631px;top:403.5px;" width="7" height="8" viewBox="0 0 7 8"><rect x="1" y="0.5" width="5" height="7" rx="1" fill="#fff" stroke="#555" stroke-width="0.8"/><rect x="1" y="2" width="5" height="1" fill="#555"/></svg>
<div class="a" style="left:0px;top:412px;width:640px;height:3.5px;background:#d3e2ed;"></div>
<div class="a" style="left:24px;top:412px;width:163px;height:3.5px;background:#f7f9fb;"></div>
<div class="a" style="left:352px;top:412px;width:24px;height:3.5px;background:#fbfcfd;"></div>
<div class="a" style="left:480px;top:412px;width:160px;height:3.5px;background:#e9edf0;"></div>
<div class="a" style="left:0px;top:415.5px;width:640px;height:1px;background:#7a8a96;"></div>
<div class="t" style="left:607px;top:414.75px;font-size:4.5px;line-height:4.5px;color:#444;font-weight:normal;font-family:'Liberation Sans';">01:20</div>
<div class="a" style="left:33.5px;top:93px;width:137px;height:287px;background:#5a5a5a;border-radius:13px"></div>
<div class="a" style="left:34.7px;top:94.2px;width:134.3px;height:284.6px;background:#000;border-radius:12px"></div>
<div class="a" style="left:36px;top:367px;width:132px;height:11.5px;background:#0e0e0e;border-radius:6px 6px 11px 11px"></div>
<div class="a" style="left:76px;top:108.3px;width:52px;height:2.2px;background:#2b2b2b;border-radius:1px"></div>
<svg class="a" style="left:54.5px;top:106.5px;" width="6" height="6" viewBox="0 0 6 6"><circle cx="3" cy="3" r="2.2" fill="#1a1a22" stroke="#3a3a48" stroke-width="0.7"/></svg>
<svg class="a" style="left:136px;top:125.5px;" width="5" height="5" viewBox="0 0 5 5"><path d="M0 0.5 Q2.5 -0.5 5 0.5 L2.5 4.5Z" fill="#fff"/></svg>
<svg class="a" style="left:142px;top:125.5px;" width="4.5" height="4.5" viewBox="0 0 4.5 4.5"><path d="M4.5 0 V4.5 H0Z" fill="#fff"/></svg>
<div class="a" style="left:148.3px;top:125.3px;width:3.5px;height:4.8px;background:#fff;border-radius:0.5px"></div>
<div class="t" style="left:154px;top:125.25px;font-size:5.3px;line-height:5.3px;color:#fff;font-weight:normal;font-family:'Liberation Sans';transform:scaleX(0.775);transform-origin:0 50%;">1:23</div>
<div class="a" style="left:39px;top:131px;width:126px;height:203px;background:#fff;"></div>
<div class="t" style="left:43.7px;top:144.35px;font-size:7.3px;line-height:7.3px;color:#2a2a2a;font-weight:normal;font-family:'Liberation Sans';transform:scaleX(0.840);transform-origin:0 50%;">Login</div>
<div class="a" style="left:63px;top:218px;width:76px;height:14px;background:#fafafa;border-radius:3px"></div>
<div class="t" style="left:66px;top:222.00px;font-size:6px;line-height:6px;color:#444;font-weight:normal;font-family:'Liberation Sans';transform:scaleX(1.000);transform-origin:0 50%;">Mail</div>
<div class="a" style="left:63px;top:250px;width:76px;height:14px;background:#fafafa;border-radius:3px"></div>
<div class="t" style="left:66px;top:254.00px;font-size:6px;line-height:6px;color:#444;font-weight:normal;font-family:'Liberation Sans';transform:scaleX(0.911);transform-origin:0 50%;">Password</div>
<div class="a" style="left:80px;top:289px;width:42px;height:15.5px;background:#1a87d9;border-radius:8px"></div>
<div class="t" style="left:94.9px;top:294.80px;font-size:4px;line-height:4px;color:#fff;font-weight:bold;font-family:'Liberation Sans';transform:scaleX(0.979);transform-origin:0 50%;">LOGIN</div>
<svg class="a" style="left:109.5px;top:216.5px;" width="7" height="11" viewBox="0 0 7 11"><path d="M0.5 0.5 V9 L2.6 7 L4 10 L5.3 9.4 L4 6.5 L6.5 6.5Z" fill="#fff" stroke="#333" stroke-width="0.7"/></svg>
<svg class="a" style="left:63.5px;top:338px;" width="5" height="6" viewBox="0 0 5 6"><path d="M4.5 0.5 V5.5 L0.5 3Z" fill="#fff"/></svg>
<svg class="a" style="left:98px;top:338px;" width="6" height="6" viewBox="0 0 6 6"><circle cx="3" cy="3" r="2.5" fill="#fff"/></svg>
<div class="a" style="left:134.5px;top:338.5px;width:5px;height:5px;background:#fff;"></div>
<div class="a" style="left:75px;top:364px;width:52px;height:2.5px;background:#333;border-radius:1px"></div>
<div class="a" style="left:174px;top:92px;width:31px;height:247px;background:#f2f2f2;border:1px solid #8e8e8e"></div>
<div class="a" style="left:181px;top:99px;width:5px;height:1px;background:#777;"></div>
<svg class="a" style="left:194px;top:96.5px;" width="5" height="5" viewBox="0 0 5 5"><path d="M0.5 0.5 L4.5 4.5 M4.5 0.5 L0.5 4.5" stroke="#777" stroke-width="0.8"/></svg>
<svg class="a" style="left:184.4px;top:110.5px;" width="10" height="10" viewBox="0 0 10 10"><path d="M2.3 2.8 A3.6 3.6 0 1 0 7.7 2.8" stroke="#5c6f7d" stroke-width="1.2" fill="none"/><path d="M5 0.8 V4.8" stroke="#5c6f7d" stroke-width="1.2"/></svg>
<svg class="a" style="left:184.4px;top:131.6px;" width="10" height="10" viewBox="0 0 10 10"><path d="M0.8 3.5 H2.5 L5 1 V9 L2.5 6.5 H0.8Z" fill="#5c6f7d"/><path d="M6.5 3 Q7.8 5 6.5 7 M7.8 1.8 Q9.8 5 7.8 8.2" stroke="#5c6f7d" stroke-width="0.8" fill="none"/></svg>
<svg class="a" style="left:184.4px;top:152.7px;" width="10" height="10" viewBox="0 0 10 10"><path d="M1.5 3.5 H3.2 L5.7 1 V9 L3.2 6.5 H1.5Z" fill="#5c6f7d"/><path d="M7 3.2 Q8.2 5 7 6.8" stroke="#5c6f7d" stroke-width="0.8" fill="none"/></svg>
<svg class="a" style="left:184.4px;top:173.8px;" width="10" height="10" viewBox="0 0 10 10"><rect x="2.4" y="1.6" width="5.2" height="7" rx="0.5" transform="rotate(-48 5 5)" fill="none" stroke="#5c6f7d" stroke-width="1"/><path d="M6.2 0.3 A4.6 4.6 0 0 1 9.8 4" stroke="#5c6f7d" stroke-width="0.7" fill="none"/></svg>
<svg class="a" style="left:184.4px;top:194.9px;" width="10" height="10" viewBox="0 0 10 10"><rect x="2.4" y="1.6" width="5.2" height="7" rx="0.5" transform="rotate(48 5 5)" fill="none" stroke="#5c6f7d" stroke-width="1"/><path d="M0.2 4 A4.6 4.6 0 0 1 3.8 0.3" stroke="#5c6f7d" stroke-width="0.7" fill="none"/></svg>
<svg class="a" style="left:184.4px;top:216.0px;" width="10" height="10" viewBox="0 0 10 10"><rect x="0.6" y="2.2" width="8.8" height="7" rx="0.6" fill="#5c6f7d"/><rect x="3" y="1" width="4" height="2" fill="#5c6f7d"/><circle cx="5" cy="5.7" r="1.8" fill="none" stroke="#dfe5ea" stroke-width="0.9"/></svg>
<svg class="a" style="left:184.4px;top:237.10000000000002px;" width="10" height="10" viewBox="0 0 10 10"><circle cx="4.3" cy="4.3" r="3" fill="none" stroke="#5c6f7d" stroke-width="1"/><path d="M6.5 6.5 L9.2 9.2" stroke="#5c6f7d" stroke-width="1.2"/><path d="M2.8 4.3 H5.8 M4.3 2.8 V5.8" stroke="#5c6f7d" stroke-width="0.7"/></svg>
<svg class="a" style="left:184.4px;top:258.20000000000005px;" width="10" height="10" viewBox="0 0 10 10"><path d="M7 1 V9 L1.8 5Z" fill="none" stroke="#5c6f7d" stroke-width="0.9"/></svg>
<svg class="a" style="left:184.4px;top:279.3px;" width="10" height="10" viewBox="0 0 10 10"><circle cx="5" cy="5" r="3.6" fill="none" stroke="#5c6f7d" stroke-width="0.9"/></svg>
<svg class="a" style="left:184.4px;top:300.4px;" width="10" height="10" viewBox="0 0 10 10"><rect x="2" y="2.2" width="6" height="6" fill="none" stroke="#5c6f7d" stroke-width="0.9"/></svg>
<svg class="a" style="left:184.4px;top:321.5px;" width="10" height="10" viewBox="0 0 10 10"><circle cx="2" cy="5.3" r="0.8" fill="#4a5560"/><circle cx="5" cy="5.3" r="0.8" fill="#4a5560"/><circle cx="8" cy="5.3" r="0.8" fill="#4a5560"/></svg>
</body></html>
